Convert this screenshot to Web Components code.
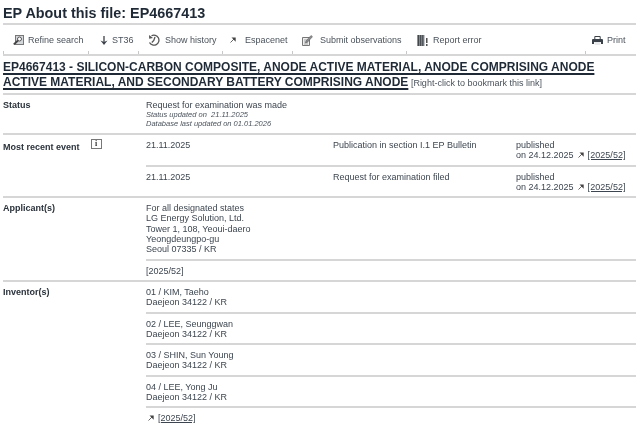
<!DOCTYPE html>
<html><head><meta charset="utf-8">
<style>
html,body{margin:0;padding:0;background:#fff;overflow:hidden}
body{font:9px/10.3px "Liberation Sans",Arial,sans-serif;color:#3d4650;width:640px;height:426px}
</style></head><body>
<ep-page>
  <ep-title>EP About this file: EP4667413</ep-title>
  <ep-toolbar>
    <ep-tool w="86" pad="10" tx="25" icon="refine" first>Refine search</ep-tool>
    <ep-tool w="50" pad="11" tx="23" icon="down">ST36</ep-tool>
    <ep-tool w="84" pad="9" tx="26" icon="history">Show history</ep-tool>
    <ep-tool w="70" pad="7" tx="22" icon="ext">Espacenet</ep-tool>
    <ep-tool w="114" pad="9" tx="27" icon="submit">Submit observations</ep-tool>
    <ep-tool w="179" pad="10" tx="26" icon="report">Report error</ep-tool>
    <ep-tool w="50" pad="6" tx="21" icon="print" last>Print</ep-tool>
  </ep-toolbar>
  <ep-heading note="[Right-click to bookmark this link]">EP4667413 - SILICON-CARBON COMPOSITE, ANODE ACTIVE MATERIAL, ANODE COMPRISING ANODE ACTIVE MATERIAL, AND SECONDARY BATTERY COMPRISING ANODE</ep-heading>
  <ep-section label="Status" style="height:40px">
    <div>Request for examination was made</div>
    <ep-small>Status updated on&nbsp; 21.11.2025</ep-small>
    <ep-small>Database last updated on 01.01.2026</ep-small>
  </ep-section>
  <ep-section label="Most recent event" info>
    <ep-event date="21.11.2025" title="Publication in section I.1 EP Bulletin" ref="[2025/52]"></ep-event>
    <ep-event date="21.11.2025" title="Request for examination filed" ref="[2025/52]" divided></ep-event>
  </ep-section>
  <ep-section label="Applicant(s)">
    <ep-sub>For all designated states<br>LG Energy Solution, Ltd.<br>Tower 1, 108, Yeoui-daero<br>Yeongdeungpo-gu<br>Seoul 07335 / KR</ep-sub>
    <ep-sub divided>[2025/52]</ep-sub>
  </ep-section>
  <ep-section label="Inventor(s)" style="border-bottom:0">
    <ep-sub>01 / KIM, Taeho<br>Daejeon 34122 / KR</ep-sub>
    <ep-sub divided>02 / LEE, Seunggwan<br>Daejeon 34122 / KR</ep-sub>
    <ep-sub divided>03 / SHIN, Sun Young<br>Daejeon 34122 / KR</ep-sub>
    <ep-sub divided>04 / LEE, Yong Ju<br>Daejeon 34122 / KR</ep-sub>
    <ep-sub divided><ep-ref>[2025/52]</ep-ref></ep-sub>
  </ep-section>
</ep-page>
<script>
const ICONS={
refine:'<svg width="11" height="10" viewBox="0 0 11 10"><rect x="2.500" y=".5" width="8" height="9" fill="#d4d7da" stroke="#777"/><circle cx="6.500" cy="4" r="2" fill="#fff" stroke="#555"/><path d="M5 5.500 .8 9.500" stroke="#444" stroke-width="1.800"/></svg>',
down:'<svg width="8" height="9" viewBox="0 0 8 9"><path d="M4 0v7" stroke="#3a4148" stroke-width="1.300"/><path d="M.5 4.500 4 9l3.500-4.500L4 6z" fill="#3a4148"/></svg>',
history:'<svg width="12" height="12" viewBox="0 0 12 12"><path d="M3.500 1.800A5 5 0 1 1 1.500 8.500" fill="none" stroke="#555" stroke-width="1.300"/><path d="M1 1l.2 3.800L5 4z" fill="#555"/><path d="M7 3 5.800 6.500 3.800 8.500" fill="none" stroke="#555" stroke-width="1.300"/></svg>',
ext:'<svg width="6" height="6" viewBox="0 0 6 6"><path d="M.5 5.500 4 2" stroke="#555" stroke-width=".9"/><path d="M1.500 .5H5.700V4.700z" fill="#444"/></svg>',
submit:'<svg width="11" height="11" viewBox="0 0 11 11"><path d="M.5 2.500h7v8h-7z" fill="#eee" stroke="#777"/><path d="M2 5h4M2 7h4M2 9h4" stroke="#888" stroke-width=".7"/><path d="M4 6l5-5.500 1.500 1.200-5 5.500-2 .7z" fill="#8a8d90" stroke="#555" stroke-width=".5"/></svg>',
report:'<svg width="11" height="11" viewBox="0 0 11 11"><path d="M0 0h7.500v11H0z" fill="#8b8f94"/><path d="M1.600 0v11M3.700 0v11M5.800 0v11" stroke="#33383d" stroke-width=".9"/><path d="M9.800 3v5M9.800 9v2" stroke="#333" stroke-width="1.300"/></svg>',
print:'<svg width="11" height="9" viewBox="0 0 11 9"><path d="M2.800 3.500V.5h5.400v3" fill="#fff" stroke="#3a4148"/><path d="M0 4a1 1 0 0 1 1-1h9a1 1 0 0 1 1 1v4H9V6H2v2H0z" fill="#3a4148"/><path d="M2.500 6h6v3h-6z" fill="#e9eaeb"/></svg>'
};
const def=(n,html)=>customElements.define(n,class extends HTMLElement{
  constructor(){super();this.attachShadow({mode:'open'});}
  connectedCallback(){this.shadowRoot.innerHTML=typeof html==='function'?html(this):html;}
});
const LINE='2px solid #d6d6d6';
def('ep-page',`<style>:host{display:block;padding:0 4px 0 3px;filter:blur(.4px)}</style><slot></slot>`);
def('ep-title',`<style>:host{display:block;font:bold 14.400px/17px "Liberation Sans",Arial,sans-serif;color:#1f2a36;padding-top:5px;height:18px;border-bottom:${LINE}}</style><slot></slot>`);
def('ep-toolbar',`<style>:host{display:flex;height:29px;border-bottom:${LINE}}</style><slot></slot>`);
def('ep-tool',el=>{
  const w=+el.getAttribute('w'),pad=+el.getAttribute('pad'),tx=+el.getAttribute('tx');
  const tick='linear-gradient(#c8c8c8,#c8c8c8)';
  const bg=[];
  if(!el.hasAttribute('last'))bg.push(tick+' right bottom/1px 3px no-repeat');
  if(el.hasAttribute('first'))bg.push(tick+' left bottom/1px 3px no-repeat');
  return `<style>:host{display:flex;box-sizing:border-box;width:${w}px;flex:none;height:29px;padding:10px 0 0 ${pad}px;color:#4a525b;white-space:nowrap;background:${bg.join(',')||'none'}}
  .i{display:flex;align-items:center;height:10px;width:${tx-pad}px;flex:none}</style><span class="i">${ICONS[el.getAttribute('icon')]}</span><slot></slot>`;
});
def('ep-heading',el=>`<style>:host{display:block;box-sizing:border-box;height:39px;padding-top:5px;border-bottom:${LINE};color:#1f2a36;font:9px/13.500px "Liberation Sans",Arial,sans-serif}
 b{font-size:12px;text-decoration:underline;text-decoration-thickness:1.500px;text-underline-offset:1.500px}
 i{font-style:normal;color:#4a525b}</style><b><slot></slot></b> <i>${el.getAttribute('note')}</i>`);
def('ep-section',el=>{
  const info=el.hasAttribute('info');
  return `<style>:host{display:grid;grid-template-columns:143px 1fr;border-bottom:${LINE};box-sizing:border-box}
 .l{display:flex;align-items:flex-start;font-weight:bold;color:#2a323b;padding-top:${info?7:5}px}
 .c{padding-top:5px;min-width:0}
 .info{box-sizing:border-box;margin:-3px 0 0 11px;width:11px;height:10px;border:1px solid #777;font:bold 8px/8px "Liberation Serif",serif;text-align:center;color:#333}</style>
 <div class="l"><span>${el.getAttribute('label')}</span>${info?'<span class="info">i</span>':''}</div><div class="c"><slot></slot></div>`;
});
def('ep-small',`<style>:host{display:block;font-size:7.500px;line-height:9px;font-style:italic;color:#4a525b}</style><slot></slot>`);
def('ep-sub',el=>`<style>:host{display:block;padding-bottom:4px;${el.hasAttribute('divided')?`border-top:${LINE};padding-top:5px;`:''}}</style><slot></slot>`);
def('ep-ref',`<style>:host{display:inline-flex;align-items:center;gap:4px;padding-left:2px}
 u{text-decoration:underline}</style>${ICONS.ext}<u><slot></slot></u>`);
def('ep-event',el=>`<style>:host{display:grid;grid-template-columns:187px 183px 1fr;padding-bottom:4px;${el.hasAttribute('divided')?`border-top:${LINE};padding-top:5px;`:''}}
 u{text-decoration:underline;letter-spacing:.05px}svg{margin:0 1.500px 0 1.500px}</style>
 <div>${el.getAttribute('date')}</div><div>${el.getAttribute('title')}</div>
 <div>published<br>on 24.12.2025 ${ICONS.ext} <u>${el.getAttribute('ref')}</u></div>`);
</script>
</body></html>
